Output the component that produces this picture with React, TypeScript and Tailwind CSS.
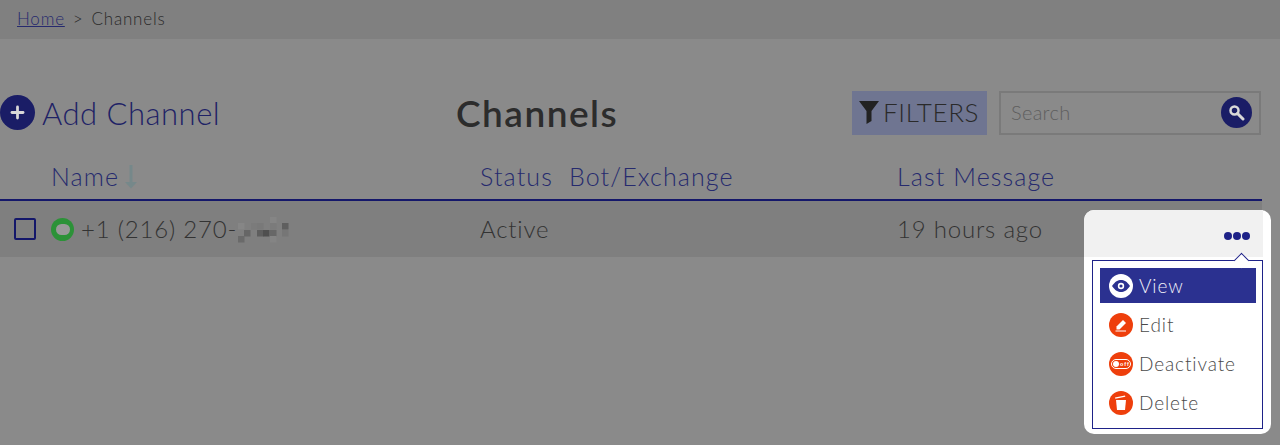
import { Plus } from "lucide-react";

const cells: [number, number, string][] = [
  [32, 3, "#858585"],
  [0, 9, "#868686"],
  [13, 9, "#7b7b7b"],
  [19, 9, "#797979"],
  [32, 9, "#7b7b7b"],
  [44, 9, "#5f5f5f"],
  [6, 16, "#666666"],
  [19, 16, "#5e5e5e"],
  [25, 16, "#4f4f4f"],
  [32, 16, "#676767"],
  [44, 16, "#767676"],
  [0, 22, "#6a6a6a"],
  [32, 22, "#848484"],
];

function Redacted() {
  return (
    <svg width="52" height="30" className="ml-[1px]">
      {cells.map(([x, y, c], i) => (
        <rect key={i} x={x} y={y} width="6.5" height="6.5" fill={c} />
      ))}
    </svg>
  );
}

function MenuItem({ label, active, icon }: { label: string; active?: boolean; icon: React.ReactNode }) {
  return (
    <div
      className={`flex h-[35px] items-center gap-[6px] px-[9px] text-[19px] tracking-[0.9px] ${
        active ? "bg-[#2b3190] text-[#f0f0f8]" : "text-[#4a4a4a]"
      }`}
    >
      <span
        className={`flex h-[24px] w-[24px] items-center justify-center rounded-full ${
          active ? "bg-white" : "bg-[#ee3f0c]"
        }`}
      >
        {icon}
      </span>
      <span className="mt-[2px]">{label}</span>
    </div>
  );
}

export default function App() {
  return (
    <div className="relative h-[445px] w-[1280px] overflow-hidden bg-[#8a8a8a] font-['Lato','Open_Sans',sans-serif] font-light text-[#2a2a2a]">
      <div className="flex h-[39px] items-center gap-[8px] bg-[#808080] pb-[2px] pl-[17px] text-[17px] tracking-[0.8px]">
        <a className="text-[#262a6e] underline">Home</a>
        <span>&gt;</span>
        <span>Channels</span>
      </div>

      <div className="mt-[51px] flex h-[45px] items-center">
        <div className="flex w-[456px] items-center gap-[7px] text-[31px] tracking-[0.5px] text-[#1e2266]">
          <span className="flex h-[35px] w-[35px] items-center justify-center rounded-full bg-[#1a1d66] text-[#d8d8d8]">
            <Plus size={19} strokeWidth={3.5} />
          </span>
          <span className="mt-[2px]">Add Channel</span>
        </div>
        <h1 className="w-[396px] text-[37px] font-semibold leading-none tracking-[1.5px] text-[#2c2c2c]">Channels</h1>
        <div className="flex h-[44px] w-[135px] items-center bg-[#6f7591] pl-[7px] text-[26px] tracking-[0.6px]">
          <svg width="20" height="23" viewBox="0 0 20 23" className="mr-[4px]">
            <path d="M0 0H20L12.5 10V20L7.5 23V10Z" fill="#222" />
          </svg>
          FILTERS
        </div>
        <div className="ml-[12px] flex h-[44px] w-[262px] items-center justify-between border-2 border-[#7a7a7a] pb-[2px] pl-[10px] pr-[7px] text-[20px] tracking-[0.3px] text-[#5f5f5f]">
          Search
          <span className="mt-[2px] flex h-[31px] w-[31px] items-center justify-center rounded-full bg-[#1a1d66]">
            <svg width="17" height="17" viewBox="0 0 17 17" fill="none" stroke="#d8d8d8">
              <circle cx="6.500" cy="6.500" r="4" strokeWidth="2.500" />
              <path d="M9.500 9.500L15 15" strokeWidth="3" strokeLinecap="round" />
            </svg>
          </span>
        </div>
      </div>

      <div className="mt-[19px] w-[1262px]">
        <div className="flex h-[47px] items-center border-b-2 border-[#14176a] text-[25px] tracking-[1.1px] text-[#262a6e]">
          <div className="flex w-[480px] items-center pl-[51px]">
            Name
            <svg width="14" height="24" viewBox="0 0 14 24" className="ml-[5px]">
              <path d="M5.5 0H8.5V17H13L7 23.5L1 17H5.5Z" fill="#76888a" />
            </svg>
          </div>
          <div className="w-[89px]">Status</div>
          <div className="w-[328px]">Bot/Exchange</div>
          <div>Last Message</div>
        </div>
        <div className="flex h-[56px] items-center bg-[#7f7f7f] text-[24px] tracking-[0.8px] text-[#333333]">
          <div className="flex w-[480px] items-center pl-[14px]">
            <span className="h-[22px] w-[22px] rounded-[2px] border-2 border-[#14176a]" />
            <span className="ml-[15px] mr-[7px] flex h-[23px] w-[23px] items-center justify-center rounded-full bg-[#2c9238]">
              <span className="h-[11px] w-[14px] rounded-full bg-[#999999]" />
            </span>
            +1 (216) 270-
            <Redacted />
          </div>
          <div className="w-[417px]">Active</div>
          <div>19 hours ago</div>
        </div>
      </div>

      <div className="absolute left-[1084px] top-[210px] h-[224px] w-[187px] rounded-[10px] bg-white">
        <div className="flex h-[47px] w-[179px] items-center justify-end gap-[1px] rounded-tl-[10px] bg-[#f1f1f1] pr-[13px] pt-[4px]">
          <span className="h-[8px] w-[8px] rounded-full bg-[#1e2288]" />
          <span className="h-[8px] w-[8px] rounded-full bg-[#1e2288]" />
          <span className="h-[8px] w-[8px] rounded-full bg-[#1e2288]" />
        </div>
        <div className="absolute left-[8px] top-[50px] h-[169px] w-[171px] border border-[#1e2288] bg-white pl-[7px] pr-[6px] pt-[7px]">
          <span className="absolute right-[15px] top-[-6px] h-[11px] w-[11px] rotate-45 border-l border-t border-[#1e2288] bg-white" />
          <MenuItem
            label="View"
            active
            icon={
              <svg width="18" height="12" viewBox="0 0 18 12">
                <path d="M0 6C3 1.5 6 0 9 0s6 1.500 9 6c-3 4.500-6 6-9 6S3 10.500 0 6Z" fill="#2b3190" />
                <circle cx="9" cy="6" r="3.200" fill="#fff" />
                <circle cx="9" cy="6" r="1.600" fill="#2b3190" />
              </svg>
            }
          />
          <div className="mt-[4px] flex flex-col gap-[4px]">
            <MenuItem
              label="Edit"
              icon={
                <svg width="16" height="16" viewBox="0 0 16 16">
                  <path d="M3.500 9.500L10 3L13 6L6.500 12.500H3.500Z" fill="#fff" />
                  <path d="M2.500 14H13" stroke="#fff" strokeWidth="1" />
                </svg>
              }
            />
            <MenuItem
              label="Deactivate"
              icon={
                <svg width="20" height="10" viewBox="0 0 20 10">
                  <rect x="0.500" y="0.500" width="19" height="9" rx="4.500" fill="none" stroke="#fff" />
                  <circle cx="5" cy="5" r="3" fill="#fff" />
                  <text x="9" y="7" fontSize="5.500" fontWeight="700" fill="#fff" fontFamily="'Liberation Sans', sans-serif">
                    off
                  </text>
                </svg>
              }
            />
            <MenuItem
              label="Delete"
              icon={
                <svg width="16" height="18" viewBox="0 0 16 18">
                  <path d="M2 3.500L12 1.500L12.300 2.800L2.300 4.800Z" fill="#fff" />
                  <path d="M3 6H13L12 16H4Z" fill="#fff" />
                </svg>
              }
            />
          </div>
        </div>
      </div>
    </div>
  );
}
